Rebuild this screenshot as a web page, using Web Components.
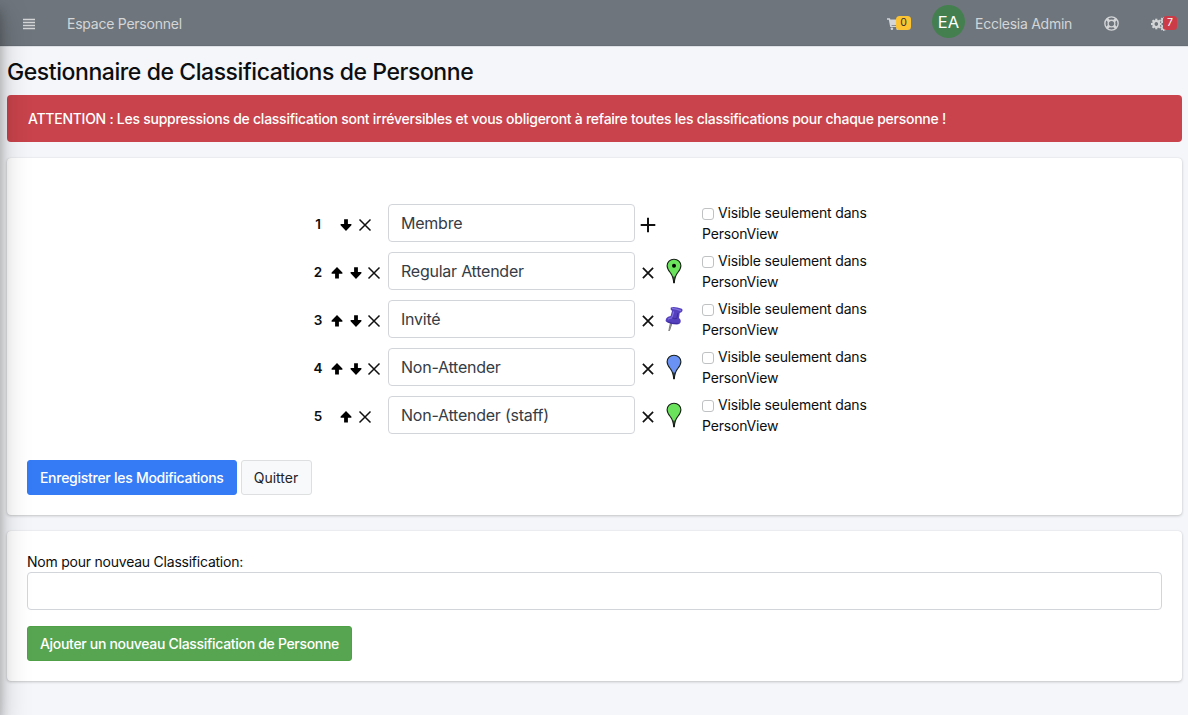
<!DOCTYPE html>
<html lang="fr">
<head>
<meta charset="utf-8">
<title>Gestionnaire de Classifications de Personne</title>
<style>
html,body{margin:0;height:100%;overflow:hidden}
body{background:#f4f6f9;color:#0c0e10;font:14px/21px Inter,"Liberation Sans",sans-serif}
</style>
</head>
<body>
<classification-page></classification-page>
<script>
// Registers an element; setup fills the cloned template before it is attached.
const define = (name, html, setup) => {
  const tpl = document.createElement('template');
  tpl.innerHTML = html;
  customElements.define(name, class extends HTMLElement {
    connectedCallback() {
      if (this.shadowRoot) return;
      const root = this.attachShadow({mode: 'open'});
      const content = tpl.content.cloneNode(true);
      if (setup) setup(this, content);
      root.append(content);
    }
  });
};

const gear = (cx, cy, r, n) => {
  let teeth = '';
  for (let i = 0; i < n; i++) teeth += `<rect x="${cx - r * .2}" y="${cy - r}" width="${r * .4}" height="${r * .6}" transform="rotate(${i * 360 / n} ${cx} ${cy})"/>`;
  return `<g fill="currentColor">${teeth}</g><circle cx="${cx}" cy="${cy}" r="${r * .56}" fill="none" stroke="currentColor" stroke-width="${r * .4}"/>`;
};
const balloon = (fill, dot) => `<svg width="16" height="26" viewBox="0 0 16 26"><path d="M8 1.200C4 1.200 1.100 4 1.100 7.700c0 3 1.700 5 3.400 7.200C6.200 17 7.200 19 7.700 24.600h.6C8.800 19 9.800 17 11.500 14.900c1.700-2.200 3.400-4.200 3.400-7.200C14.900 4 12 1.200 8 1.200z" fill="${fill}" stroke="#182018" stroke-width="1.100"/>${dot ? '<circle cx="8" cy="7.700" r="2" fill="#000"/>' : ''}<path d="M8 18.500v6.500" stroke="#101510" stroke-width="1.100"/></svg>`;
const icons = {
  bars: '<svg width="12" height="12" viewBox="0 0 12 12"><path d="M0 1.500h12M0 4.500h12M0 7.500h12M0 10.500h12" stroke="currentColor" stroke-width="1.500"/></svg>',
  cart: '<svg width="14" height="12" viewBox="0 0 14 12"><g fill="currentColor"><path d="M0 .300h2.600q.5 0 .6.500l.1.700H13q.6 0 .5.600l-1 4.300q-.1.500-.6.500H4.500l.2.900H11.500q.5.100.4.700t-.5.600H3.700q-.5 0-.6-.5L1.800 1.700H0z"/><circle cx="4.900" cy="10.700" r="1.300"/><circle cx="10.600" cy="10.700" r="1.300"/></g></svg>',
  ring: '<svg width="15" height="15" viewBox="0 0 14 14" fill="none" stroke="currentColor"><circle cx="7" cy="7" r="6.200" stroke-width="1.300"/><circle cx="7" cy="7" r="3.100" stroke-width="1.300"/><path d="M2.700 2.700l2.100 2.100M9.200 9.200l2.100 2.100M11.300 2.700L9.200 4.800M4.800 9.200l-2.100 2.100" stroke-width="2.600"/></svg>',
  cogs: `<svg width="18" height="14" viewBox="0 0 18 14">${gear(5.3, 7, 5.3, 8)}${gear(12.8, 3.4, 3.5, 8)}${gear(12.8, 10.6, 3.5, 8)}</svg>`,
  up: '<svg width="14" height="14" viewBox="0 0 14 14"><path d="M7 .900L12.400 6.500v1.300H8.900v4.700H5.100V7.800H1.600V6.500z" fill="#000"/></svg>',
  down: '<svg width="14" height="14" viewBox="0 0 14 14"><path d="M7 12.900L12.400 7.300V6H8.900V1.300H5.100V6H1.600v1.300z" fill="#000"/></svg>',
  thin: '<svg width="14" height="14" viewBox="0 0 14 14"><path d="M1.500 1.500l11 11M12.500 1.500l-11 11" stroke="#111" stroke-width="1.500"/></svg>',
  cross: '<svg width="14" height="14" viewBox="0 0 14 14"><path d="M1.900 1.900l10.200 10.200M12.100 1.900L1.900 12.100" stroke="#111" stroke-width="1.700"/></svg>',
  plus: '<svg width="16" height="16" viewBox="0 0 16 16"><path d="M8 .700v14.600M.700 8h14.600" stroke="#111" stroke-width="2"/></svg>',
  greendot: balloon('#6ae25c', true),
  blue: balloon('#6a92f5'),
  green: balloon('#6ae25c'),
  pushpin: '<svg width="18" height="26" viewBox="0 0 18 26"><path d="M7.200 16.500L4.800 23.800l-.9 1.200.3-2.200 1.400-6.500z" fill="#a5a5a5" stroke="#777" stroke-width=".9"/><path d="M5.800 1.400Q10 .300 16.900 2.800q1 .600.500 2.300-.7 1.700-2.700 1.900l-.7 4.900q2.400 1.700 1.500 4.600-.8 2.100-3.800 2Q5 18.300.9 15.500q-.8-1 .4-3.200 1.500-2.200 4.300-2.400l1.400-5Q4.800 3.200 5.800 1.400z" fill="#5540bd"/><path d="M7 2.400q4 .2 9 2.200M8.700 5.500l-1.800 6M3 13.200q2-1.500 3.800-1" stroke="#8171e0" stroke-width="1.200" fill="none"/><path d="M13 7l-1.200 5.500q-2 .7-4.400-.6M2.300 15.700q5 2.600 11 1.700" stroke="#3d2c99" fill="none"/></svg>'
};

define('ui-icon', `<style>:host{display:inline-flex;align-items:center;justify-content:center}svg{display:block}</style>`,
  (el, root) => root.append(document.createRange().createContextualFragment(icons[el.getAttribute('name')])));

define('ui-badge', `<style>:host{position:absolute;box-sizing:border-box;width:15px;height:14px;border-radius:3.500px;background:#fcc332;color:#30332f;font-size:10.500px;line-height:14px;text-align:center}
:host([kind=danger]){background:#cc3c48;color:#fff;width:14px}</style><slot></slot>`);

define('nav-bar', `<style>
:host{display:flex;align-items:center;height:46px;box-sizing:border-box;background:#6e757c;border-bottom:1px solid #686e75;color:#d3d5d7;box-shadow:0 1px 0 #dee2e6}
.menu{margin-left:23px;padding-top:2px}.brand{margin-left:32px;letter-spacing:-.24px;padding-top:2px}
.right{margin-left:auto;display:flex;align-items:center;height:46px}
.it{position:relative;display:flex}
.cart{padding-top:3px}
.av{width:33px;height:33px;border-radius:50%;background:#44804f;color:#fff;font-size:16.500px;line-height:34px;text-align:center;margin:-3px 10px 0 31px}
.cart ui-badge{left:9px;top:1px}.cogs ui-badge{left:12px;top:0}
.nm{width:98px;white-space:nowrap;letter-spacing:-.26px;padding-top:2px}
.ring{margin-left:31px;padding-top:2px}.cogs{margin:0 19px 0 32px;padding-top:2px}
.cogs ui-badge{top:1px}
</style><ui-icon class="menu" name="bars"></ui-icon><span class="brand">Espace Personnel</span>
<div class="right"><span class="it cart"><ui-icon name="cart"></ui-icon><ui-badge>0</ui-badge></span>
<span class="av">EA</span><span class="nm">Ecclesia Admin</span>
<ui-icon class="ring" name="ring"></ui-icon>
<span class="it cogs"><ui-icon name="cogs"></ui-icon><ui-badge kind="danger">7</ui-badge></span></div>`);

define('alert-box', `<style>:host{display:block;box-sizing:border-box;height:47px;padding:13px 21px;border-radius:4px;background:#c8434b;color:#fff;font-weight:500;letter-spacing:-.262px;white-space:nowrap}</style><slot></slot>`);

define('content-card', `<style>:host{display:block;box-sizing:border-box;background:#fff;border-radius:4px;padding:20px;margin-top:15px;box-shadow:0 0 1px rgba(0,0,0,.13),0 1px 3px rgba(0,0,0,.2)}</style><slot></slot>`);

define('text-field', `<style>:host{display:block}input{display:block;box-sizing:border-box;width:100%;height:38px;border:1px solid #d2d5da;border-radius:4px;background:#fff;padding:0 12px;font:16px Inter,sans-serif;letter-spacing:inherit;color:#353c45;outline:0}</style><input>`,
  (el, root) => { root.querySelector('input').value = el.getAttribute('value') || ''; });

define('push-button', `<style>:host{display:inline-block}button{display:block;box-sizing:border-box;width:100%;height:35px;border:1px solid #367bf6;border-radius:3px;background:#367bf6;color:#fff;font:500 14px Inter,sans-serif;letter-spacing:-.27px;padding:0;white-space:nowrap}
:host([kind=light]) button{background:#f8f9fa;border-color:#dddfe1;color:#1f2428;font-weight:400;letter-spacing:0}
:host([kind=success]) button{background:#58a551;border-color:#4fa047;letter-spacing:-.31px}</style><button><slot></slot></button>`);

define('classification-row', `<style>
:host{display:grid;grid-template-columns:20px 60px 247px 26px 26px 15px 180px;align-items:center;height:48px}
b{font-weight:600;font-size:13.500px;padding-top:2px;text-align:center}
.moves{display:flex;justify-content:center;gap:4.700px;padding:4px 5px 0 0}
.act{padding-top:4px}
text-field{letter-spacing:-.24px}
label{display:block;white-space:nowrap;letter-spacing:-.18px}
input{appearance:none;box-sizing:border-box;width:12px;height:12px;margin:0 4px 0 0;border:1px solid #bfc1c3;border-radius:3px;background:#fff;vertical-align:-2px}
</style><b></b><span class="moves"></span><text-field></text-field><ui-icon class="act"></ui-icon><span class="pin"></span><span></span><label><input type="checkbox">Visible seulement dans<br>PersonView</label>`,
  (el, root) => {
    root.querySelector('b').textContent = el.getAttribute('rank');
    root.querySelector('.moves').innerHTML = el.getAttribute('moves').split(' ').map(n => `<ui-icon name="${n}"></ui-icon>`).join('');
    root.querySelector('text-field').setAttribute('value', el.getAttribute('label'));
    root.querySelector('.act').setAttribute('name', el.getAttribute('action'));
    const pin = el.getAttribute('pin');
    if (pin) root.querySelector('.pin').innerHTML = `<ui-icon name="${pin}" style="display:flex"></ui-icon>`;
  });

define('classification-page', `<style>
:host{display:block;height:715px;overflow:hidden;position:relative}
main{padding:0 6px 0 7px}
h1{margin:0;padding:12px 0 9px;font-size:23px;line-height:28px;font-weight:500;letter-spacing:-.43px;white-space:nowrap;color:#0c0e10}
.list{padding:21px 0 21px 281px}
.one{height:358px;margin-top:16px;height:357px}.two{height:150px;margin-top:16px;padding-top:19px}
.edge{position:absolute;left:-250px;top:0;width:250px;height:100%;box-shadow:0 14px 28px rgba(0,0,0,.25),0 10px 10px rgba(0,0,0,.22);pointer-events:none}
.btns{display:flex;gap:4px}
.save{width:209.500px}.quit{width:71px}.add{width:325px;margin-top:16px}
.lab{display:block;padding:1px 0 0;letter-spacing:-.23px}
</style>
<nav-bar></nav-bar>
<main>
<h1>Gestionnaire de Classifications de Personne</h1>
<alert-box>ATTENTION : Les suppressions de classification sont irréversibles et vous obligeront à refaire toutes les classifications pour chaque personne !</alert-box>
<content-card class="one">
<div class="list">
<classification-row rank="1" moves="down thin" label="Membre" action="plus"></classification-row>
<classification-row rank="2" moves="up down thin" label="Regular Attender" action="cross" pin="greendot"></classification-row>
<classification-row rank="3" moves="up down thin" label="Invité" action="cross" pin="pushpin"></classification-row>
<classification-row rank="4" moves="up down thin" label="Non-Attender" action="cross" pin="blue"></classification-row>
<classification-row rank="5" moves="up thin" label="Non-Attender (staff)" action="cross" pin="green"></classification-row>
</div>
<div class="btns"><push-button class="save">Enregistrer les Modifications</push-button><push-button class="quit" kind="light">Quitter</push-button></div>
</content-card>
<content-card class="two">
<span class="lab">Nom pour nouveau Classification:</span>
<text-field></text-field>
<push-button class="add" kind="success">Ajouter un nouveau Classification de Personne</push-button>
</content-card>
</main>
<div class="edge"></div>`);
</script>
</body>
</html>
